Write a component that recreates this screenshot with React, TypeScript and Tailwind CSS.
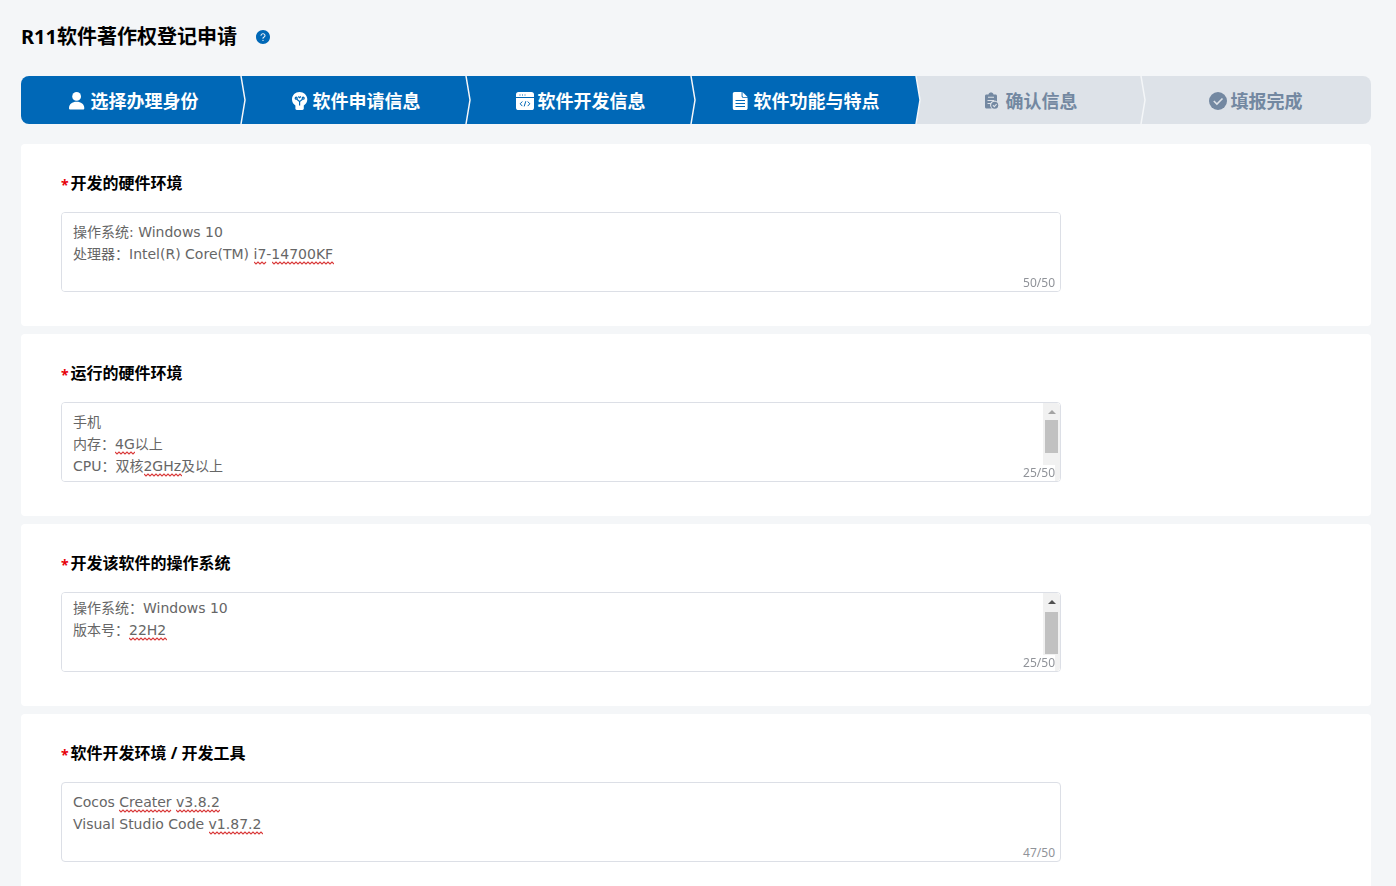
import React, { useEffect, useRef, useState } from 'react';
import { AiFillQuestionCircle } from 'react-icons/ai';
import clsx from 'clsx';

interface Typo {
    line: number;
    x: number;
    width: number;
}

interface Field {
    id: string;
    label: string;
    value: string;
    typos: Typo[];
    scroll?: number;
    thumb?: 'top' | 'bottom';
}

interface Step {
    label: string;
    icon: React.ReactNode;
    done: boolean;
}

const LINE_HEIGHT = 22;
const PADDING_TOP = 9;
const MAX_LENGTH = 50;

const UserIcon = () => (
    <svg viewBox="0 0 18 18" className="h-[18px] w-[18px]" fill="currentColor" aria-hidden="true">
        <circle cx="7.6" cy="4.4" r="4.4" />
        <path d="M0 16.2C0 12 3.2 9.8 7.6 9.8s7.7 2.2 7.7 6.4c0 .9-.5 1.4-1.4 1.4H1.4C.5 17.6 0 17.1 0 16.2z" />
    </svg>
);

const BulbIcon = () => (
    <svg viewBox="0 0 18 18" className="h-[18px] w-[18px]" aria-hidden="true">
        <path
            fill="currentColor"
            d="M8.5 0C4.3 0 1 3.2 1 7.3c0 2.7 1.400 4.900 3.400 6.200v3c0 .8.6 1.400 1.400 1.400h5.600c.8 0 1.400-.6 1.400-1.400v-3c2.100-1.300 3.500-3.500 3.500-6.200C16.300 3.200 12.800 0 8.500 0z"
        />
        <g fill="none" stroke="#0068b7" strokeWidth="1.2">
            <path d="M8.6 13.500V9.600L5.800 7.200M8.600 9.600l2.900-2.400" />
            <circle cx="5.200" cy="6.200" r="1" />
            <circle cx="12.200" cy="6.200" r="1" />
            <path d="M7.300 4.500l1.300 1.200 1.300-1.200" />
        </g>
    </svg>
);

const CodeWindowIcon = () => (
    <svg viewBox="0 0 18 18" className="h-[18px] w-[18px]" aria-hidden="true">
        <rect width="18" height="18" rx="2.6" fill="currentColor" />
        <g fill="none" stroke="#0068b7" strokeWidth="1">
            <path d="M0 5.5h18" />
            <path d="M3.5 3h1M6 3h1M8.5 3h1" />
            <path d="M6.3 9.5L4.2 11.800l2.100 2.300M11.700 9.500l2.100 2.300-2.100 2.300M9.800 9.200l-1.600 5.200" />
        </g>
    </svg>
);

const DocIcon = () => (
    <svg viewBox="0 0 18 18" className="h-[18px] w-[18px]" aria-hidden="true">
        <path
            fill="currentColor"
            d="M2.600 0h7v4c0 1 .7 1.800 1.700 1.800h4.300v10.400c0 1-.7 1.800-1.800 1.800H2.600c-1.100 0-1.800-.8-1.800-1.800V1.800C.8.8 1.500 0 2.600 0z"
        />
        <path fill="currentColor" d="M10.500 0l5.100 4.900h-4.300c-.5 0-.8-.3-.8-.8z" />
        <path fill="none" stroke="#0068b7" strokeWidth="1" d="M3.500 8.500h9.500M3.500 11.500h9.500M3.500 14.500h9.500" />
    </svg>
);

const ClipboardIcon = () => (
    <svg viewBox="0 0 18 18" className="h-[18px] w-[18px]" aria-hidden="true">
        <path
            fill="currentColor"
            d="M2.500 2.500h2C4.800 1.200 5.800.6 7 .6s2.200.6 2.500 1.900h2c.9 0 1.500.6 1.500 1.500v5.500a4 4 0 0 0-5.300 6.900H2.500C1.600 16.400 1 15.800 1 14.900V4c0-.9.6-1.500 1.500-1.500z"
        />
        <path fill="none" stroke="#dde2e8" strokeWidth="1.1" d="M4 5.300h6M3.500 8.500h6.500M3.500 11.500h3.500" />
        <circle cx="10.700" cy="13.200" r="3.500" fill="currentColor" />
        <path fill="none" stroke="#dde2e8" strokeWidth="1.1" d="M8.900 13.200l1.400 1.400 2.300-2.500" />
    </svg>
);

const CheckIcon = () => (
    <svg viewBox="0 0 18 18" className="h-[18px] w-[18px]" aria-hidden="true">
        <circle cx="9" cy="9" r="9" fill="currentColor" />
        <path fill="none" stroke="#dde2e8" strokeWidth="1.6" d="M4.800 9l3.100 3.100 5.600-5.600" />
    </svg>
);

const steps: Step[] = [
    { label: '选择办理身份', icon: <UserIcon />, done: true },
    { label: '软件申请信息', icon: <BulbIcon />, done: true },
    { label: '软件开发信息', icon: <CodeWindowIcon />, done: true },
    { label: '软件功能与特点', icon: <DocIcon />, done: true },
    { label: '确认信息', icon: <ClipboardIcon />, done: false },
    { label: '填报完成', icon: <CheckIcon />, done: false },
];

const fields: Field[] = [
    {
        id: 'dev-hardware',
        label: '开发的硬件环境',
        value: '操作系统: Windows 10\n处理器：Intel(R) Core(TM) i7-14700KF\n',
        typos: [
            { line: 1, x: 193, width: 13 },
            { line: 1, x: 211, width: 62 },
        ],
    },
    {
        id: 'run-hardware',
        label: '运行的硬件环境',
        value: '手机\n内存：4G以上\nCPU：双核2GHz及以上\n',
        typos: [
            { line: 1, x: 54, width: 20 },
            { line: 2, x: 83, width: 38 },
        ],
        thumb: 'top',
    },
    {
        id: 'dev-os',
        label: '开发该软件的操作系统',
        value: '操作系统：Windows 10\n版本号：22H2\n',
        typos: [{ line: 1, x: 68, width: 38 }],
        scroll: 4,
        thumb: 'bottom',
    },
    {
        id: 'dev-tools',
        label: '软件开发环境 / 开发工具',
        value: 'Cocos Creater v3.8.2\nVisual Studio Code v1.87.2',
        typos: [
            { line: 0, x: 58, width: 53 },
            { line: 0, x: 115, width: 44 },
            { line: 1, x: 148, width: 54 },
        ],
    },
];

// Zigzag drawn under a misspelled word
const Squiggle = ({ x, top, width }: { x: number; top: number; width: number }) => {
    const points: string[] = [];
    for (let i = 0; i <= width; i += 2) {
        points.push(`${i},${i % 4 === 0 ? 1 : 3}`);
    }
    return (
        <svg className="absolute h-1" style={{ left: x, top, width }} aria-hidden="true">
            <polyline points={points.join(' ')} fill="none" stroke="#d93a3a" strokeWidth="1.1" />
        </svg>
    );
};

const Scrollbar = ({ thumb }: { thumb: 'top' | 'bottom' }) => (
    <div className="pointer-events-none absolute inset-y-px right-px flex w-[17px] flex-col items-center rounded-r bg-[#f1f1f1]">
        <svg viewBox="0 0 8 4" className={clsx('mt-[7px] h-1 w-2', thumb === 'top' ? 'text-[#a3a3a3]' : 'text-[#505050]')} aria-hidden="true">
            <path d="M4 0l4 4H0z" fill="currentColor" />
        </svg>
        <div className={clsx('w-[13px] bg-[#c1c1c1]', thumb === 'top' ? 'mt-1.5 h-[33px]' : 'mt-2 h-[42px]')} />
    </div>
);

const TextField = ({ field }: { field: Field }) => {
    const inputRef = useRef<HTMLTextAreaElement>(null);
    const [value, setValue] = useState(field.value);
    const [scrollTop, setScrollTop] = useState(field.scroll ?? 0);

    useEffect(() => {
        if (inputRef.current && field.scroll) {
            inputRef.current.scrollTop = field.scroll;
        }
    }, [field.scroll]);

    return (
        <section className="rounded bg-white px-10 pt-[27px] pb-[34px]">
            <label htmlFor={field.id} className="flex h-6 items-center text-base font-bold text-black">
                <span className="mt-1 mr-0.5 text-sm text-red-600">*</span>
                {field.label}
            </label>
            <div className="relative mt-[17px] w-full max-w-[1000px]">
                <textarea
                    ref={inputRef}
                    id={field.id}
                    value={value}
                    maxLength={MAX_LENGTH}
                    spellCheck={false}
                    onChange={(e) => setValue(e.target.value)}
                    onScroll={(e) => setScrollTop(e.currentTarget.scrollTop)}
                    className="block h-20 w-full resize-none rounded border border-[#dcdfe6] bg-white px-[11px] py-2 font-['DejaVu_Sans','Noto_Sans_CJK_SC',sans-serif] text-sm leading-[22px] text-[#666] outline-none focus:border-[#0068b7]"
                />
                {value === field.value && (
                    <div className="pointer-events-none absolute inset-0 overflow-hidden">
                        {field.typos.map((typo) => (
                            <Squiggle
                                key={typo.x}
                                x={typo.x}
                                width={typo.width}
                                top={PADDING_TOP + LINE_HEIGHT * (typo.line + 1) - 4 - scrollTop}
                            />
                        ))}
                    </div>
                )}
                {field.thumb && <Scrollbar thumb={field.thumb} />}
                <span className="absolute right-1.5 bottom-px bg-white text-xs leading-4 text-[#909399]">
                    {value.length}/{MAX_LENGTH}
                </span>
            </div>
        </section>
    );
};

const StepBar = () => (
    <ol className="flex h-12 overflow-hidden rounded-lg">
        {steps.map((step, i) => {
            const next = steps[i + 1];
            return (
                <li
                    key={step.label}
                    aria-current={step.done && !next?.done ? 'step' : undefined}
                    className={clsx('flex w-1/6', step.done ? 'bg-[#0068b7] text-white' : 'bg-[#dde2e8] text-[#7388a1]', i === 0 && 'pl-1.5')}
                >
                    <div className="flex flex-1 items-center justify-center gap-1 pt-0.5">
                        {step.icon}
                        <span className="text-lg leading-6 font-bold whitespace-nowrap">{step.label}</span>
                    </div>
                    <svg viewBox="0 0 6 48" preserveAspectRatio="none" className="h-full w-1.5" aria-hidden="true">
                        {next && (
                            <>
                                <path d="M1 0L5 24L1 48H6V0z" fill={next.done ? '#0068b7' : '#dde2e8'} />
                                <path d="M1 0L5 24L1 48" fill="none" stroke="#f4f6f8" strokeWidth="1.5" />
                            </>
                        )}
                    </svg>
                </li>
            );
        })}
    </ol>
);

export default function App() {
    return (
        <main className="min-h-screen bg-[#f4f6f8] pt-[21px] pr-[25px] pb-5 pl-[21px] font-['Noto_Sans','Noto_Sans_CJK_SC',sans-serif]">
            <header className="flex h-8 items-center gap-[18px]">
                <h1 className="text-xl leading-8 font-bold text-black">R11软件著作权登记申请</h1>
                <button type="button" aria-label="帮助" className="text-[#0068b7]">
                    <AiFillQuestionCircle className="h-4 w-4" />
                </button>
            </header>
            <nav className="mt-[23px]">
                <StepBar />
            </nav>
            <form className="mt-5 flex flex-col gap-2">
                {fields.map((field) => (
                    <TextField key={field.id} field={field} />
                ))}
            </form>
        </main>
    );
}
